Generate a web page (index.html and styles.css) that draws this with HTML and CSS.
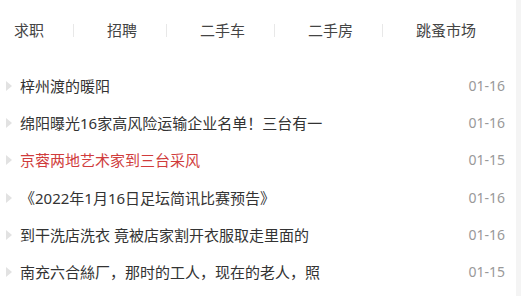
FILE: index.html
```html
<!DOCTYPE html>
<html lang="zh-CN">
<head>
<meta charset="utf-8">
<title>资讯</title>
<link rel="stylesheet" href="styles.css">
</head>
<body>
<div class="page">
  <nav class="nav">
    <a class="nav-item first">求职</a>
    <span class="sep"></span>
    <a class="nav-item">招聘</a>
    <span class="sep"></span>
    <a class="nav-item">二手车</a>
    <span class="sep"></span>
    <a class="nav-item">二手房</a>
    <span class="sep"></span>
    <a class="nav-item">跳蚤市场</a>
  </nav>
  <ul class="news">
    <li class="row"><i class="tri"></i><span class="title">梓州渡的暖阳</span><span class="date">01-16</span></li>
    <li class="row"><i class="tri"></i><span class="title">绵阳曝光16家高风险运输企业名单！三台有一</span><span class="date">01-16</span></li>
    <li class="row"><i class="tri"></i><span class="title red">京蓉两地艺术家到三台采风</span><span class="date">01-15</span></li>
    <li class="row"><i class="tri"></i><span class="title">《2022年1月16日足坛简讯比赛预告》</span><span class="date">01-16</span></li>
    <li class="row"><i class="tri"></i><span class="title">到干洗店洗衣 竟被店家割开衣服取走里面的</span><span class="date">01-16</span></li>
    <li class="row"><i class="tri"></i><span class="title">南充六合絲厂，那时的工人，现在的老人，照</span><span class="date">01-15</span></li>
  </ul>
</div>
</body>
</html>
```

FILE: styles.css
```css
html, body {
  margin: 0;
  padding: 0;
  background: #ffffff;
}

body {
  font-family: "Noto Sans", "Noto Sans CJK SC", sans-serif;
  color: #333333;
}

.page {
  width: 516px;
  height: 296px;
  border-right: 5px solid #f4f4f4;
  overflow: hidden;
}

.nav {
  display: flex;
  align-items: center;
  padding-top: 20px;
  height: 20px;
}

.nav-item {
  font-size: 15px;
  line-height: 20px;
  color: #444444;
  white-space: nowrap;
}

.nav-item.first {
  margin-left: 14px;
}

.sep {
  width: 1px;
  height: 13px;
  background: #e8e8e8;
  margin: 0 33px 0 29px;
}

.news {
  list-style: none;
  margin: 0;
  padding: 27.5px 0 0 0;
}

.row {
  display: flex;
  align-items: center;
  height: 37.2px;
  padding-left: 6px;
}

.tri {
  width: 0;
  height: 0;
  border-left: 6px solid #e2e2e2;
  border-top: 5px solid transparent;
  border-bottom: 5px solid transparent;
  margin-right: 8px;
}

.title {
  flex: 1;
  font-size: 15px;
  line-height: 20px;
  color: #333333;
  white-space: nowrap;
  overflow: hidden;
}

.title.red {
  color: #d03c3c;
}

.date {
  font-size: 14px;
  line-height: 20px;
  color: #999999;
  margin-right: 11px;
}
```
